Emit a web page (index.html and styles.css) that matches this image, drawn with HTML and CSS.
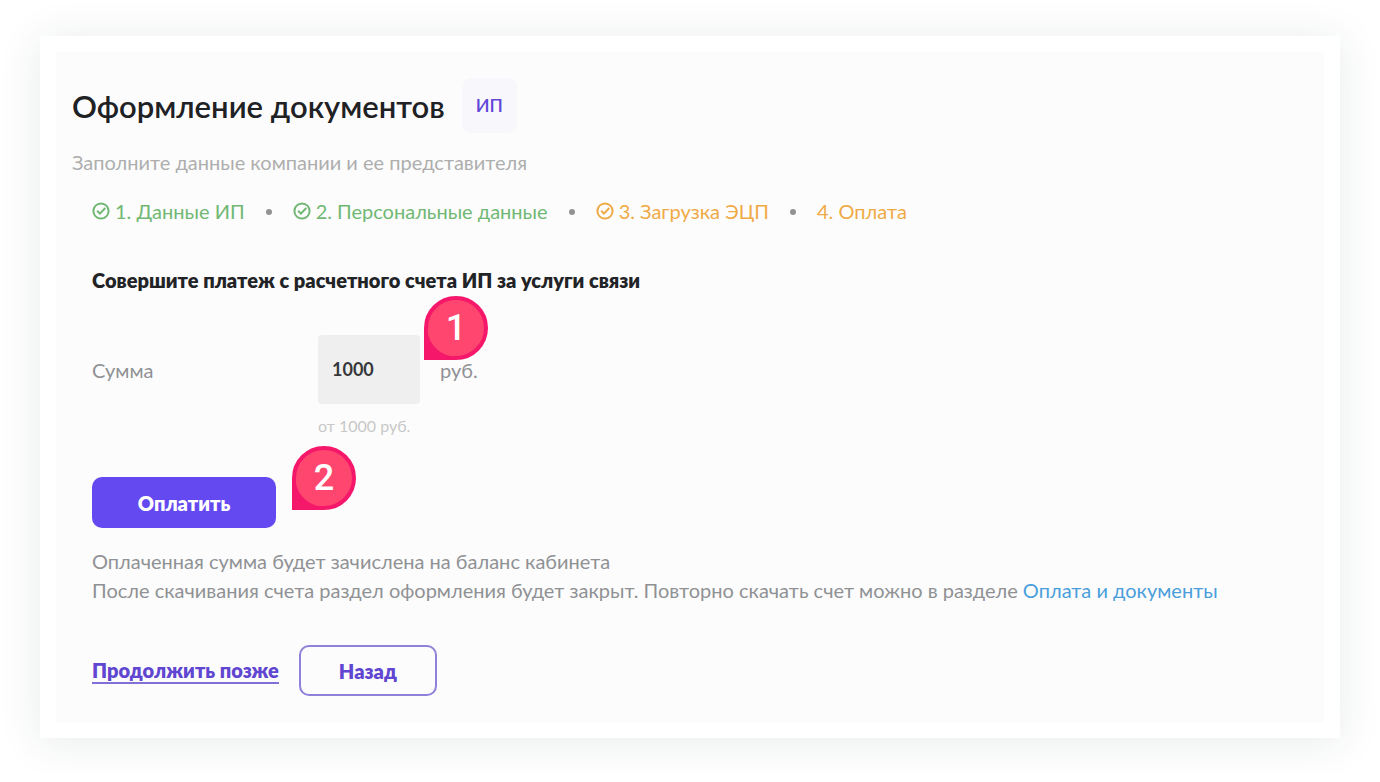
FILE: index.html
```
<!DOCTYPE html>
<html lang="ru">
<head>
    <meta charset="UTF-8">
    <meta name="viewport" content="width=device-width, initial-scale=1.0">
    <title>Оформление документов</title>
    <link rel="stylesheet" href="styles.css">
</head>
<body>
    <svg class="sprite" aria-hidden="true">
        <symbol id="icon-check" viewBox="0 0 18 18">
            <circle cx="9" cy="9" r="7.6"/>
            <path d="M5.2 8.8l2.7 2.8 5.4-5.6"/>
        </symbol>
    </svg>

    <div class="card">
        <main class="panel">
            <header class="title-row">
                <h1>Оформление документов</h1>
                <span class="tag">ИП</span>
            </header>
            <p class="subtitle">Заполните данные компании и ее представителя</p>

            <div class="content">
                <ol class="steps">
                    <li class="step done"><svg class="icon"><use href="#icon-check"/></svg>1. Данные ИП</li>
                    <li class="step done"><svg class="icon"><use href="#icon-check"/></svg>2. Персональные данные</li>
                    <li class="step current"><svg class="icon"><use href="#icon-check"/></svg>3. Загрузка ЭЦП</li>
                    <li class="step current">4. Оплата</li>
                </ol>

                <h2>Совершите платеж с расчетного счета ИП за услуги связи</h2>

                <form>
                    <div class="field">
                        <label for="amount">Сумма</label>
                        <div class="amount-wrap">
                            <input type="text" id="amount" value="1000" inputmode="numeric" aria-describedby="amount-hint">
                            <span class="pin pin-amount">1</span>
                        </div>
                        <span class="unit">руб.</span>
                        <p class="hint" id="amount-hint">от 1000 руб.</p>
                    </div>

                    <div class="pay-wrap">
                        <button type="submit" class="btn btn-primary">Оплатить</button>
                        <span class="pin pin-pay">2</span>
                    </div>
                </form>

                <div class="notes">
                    <p>Оплаченная сумма будет зачислена на баланс кабинета</p>
                    <p>После скачивания счета раздел оформления будет закрыт. Повторно скачать счет можно в разделе <a href="#">Оплата и документы</a></p>
                </div>

                <div class="actions">
                    <a href="#" class="later">Продолжить позже</a>
                    <button type="button" class="btn btn-outline">Назад</button>
                </div>
            </div>
        </main>
    </div>
</body>
</html>
```
FILE: styles.css
```
* {
    margin: 0;
    padding: 0;
    box-sizing: border-box;
}

body {
    background-color: #fff;
    color: #8f9194;
    font-family: Lato, "Noto Sans", sans-serif;
    font-size: 20px;
    line-height: 24px;
    padding: 36px 40px;
}

.sprite {
    display: none;
}

.card {
    background-color: #fff;
    box-shadow: 0 4px 40px rgba(30, 50, 50, 0.1);
    padding: 16px;
}

.panel {
    background-color: #fcfcfc;
    padding: 26px 16px;
}

.title-row {
    display: flex;
    align-items: center;
    gap: 17px;
}

h1 {
    color: #202124;
    font-size: 31px;
    font-weight: 600;
    line-height: 40px;
}

.tag {
    background-color: #f8f8fc;
    border-radius: 8px;
    color: #6246d8;
    font-size: 18px;
    font-weight: 600;
    line-height: 55px;
    padding: 0 14px;
}

.subtitle {
    color: #aeaeae;
    margin-top: 17px;
}

.content {
    padding: 25px 20px 0;
}

.steps {
    display: flex;
    list-style: none;
}

.step {
    display: flex;
    align-items: center;
    gap: 5px;
}

.step + .step::before {
    content: "";
    width: 6px;
    height: 6px;
    border-radius: 50%;
    background-color: #929292;
    margin: 2px 16px 0 21px;
}

.icon {
    width: 18px;
    height: 18px;
    fill: none;
    stroke: currentColor;
    stroke-width: 2;
}

.done {
    color: #70b873;
}

.current {
    color: #f0aa45;
}

h2 {
    color: #222326;
    font-size: 20px;
    font-weight: 800;
    margin-top: 45px;
}

.field {
    display: grid;
    grid-template-columns: 206px 102px auto;
    column-gap: 20px;
    row-gap: 12px;
    justify-content: start;
    align-items: center;
    margin-top: 43px;
}

.amount-wrap,
.pay-wrap {
    position: relative;
}

#amount {
    display: block;
    width: 100%;
    height: 69px;
    background-color: #efefef;
    border: none;
    border-radius: 4px;
    color: #36373b;
    font: 700 18px Lato, "Noto Sans", sans-serif;
    padding: 0 14px 2px;
}

.hint {
    grid-column: 2 / -1;
    color: #c8c8c8;
    font-size: 16px;
    line-height: 20px;
}

.pay-wrap {
    width: fit-content;
    margin-top: 41px;
}

.btn {
    height: 51px;
    border: none;
    border-radius: 10px;
    font: 800 20px Lato, "Noto Sans", sans-serif;
    cursor: pointer;
}

.btn-primary {
    display: block;
    background-color: #6549f0;
    color: #fff;
    min-width: 184px;
}

.btn-outline {
    background-color: transparent;
    border: 2px solid #8f80d8;
    color: #6046d0;
    min-width: 138px;
}

/* Numbered hint markers */
.pin {
    position: absolute;
    width: 64px;
    height: 64px;
    border: 4px solid #f5176a;
    border-radius: 50% 50% 50% 0;
    background: radial-gradient(circle, #ff466f 28px, #f5176a 29px);
    color: #fff;
    font: 500 36px/56px Roboto, sans-serif;
    text-align: center;
}

.pin-amount {
    left: 106px;
    top: -39px;
}

.pin-pay {
    left: 200px;
    top: -31px;
}

.notes {
    line-height: 29px;
    margin-top: 19px;
}

.notes a {
    color: #4a9edb;
    text-decoration: none;
}

.actions {
    display: flex;
    align-items: center;
    gap: 20px;
    margin-top: 40px;
}

.later {
    border-bottom: 2px solid #8070d8;
    color: #6046d0;
    font-weight: 800;
    text-decoration: none;
}
```
